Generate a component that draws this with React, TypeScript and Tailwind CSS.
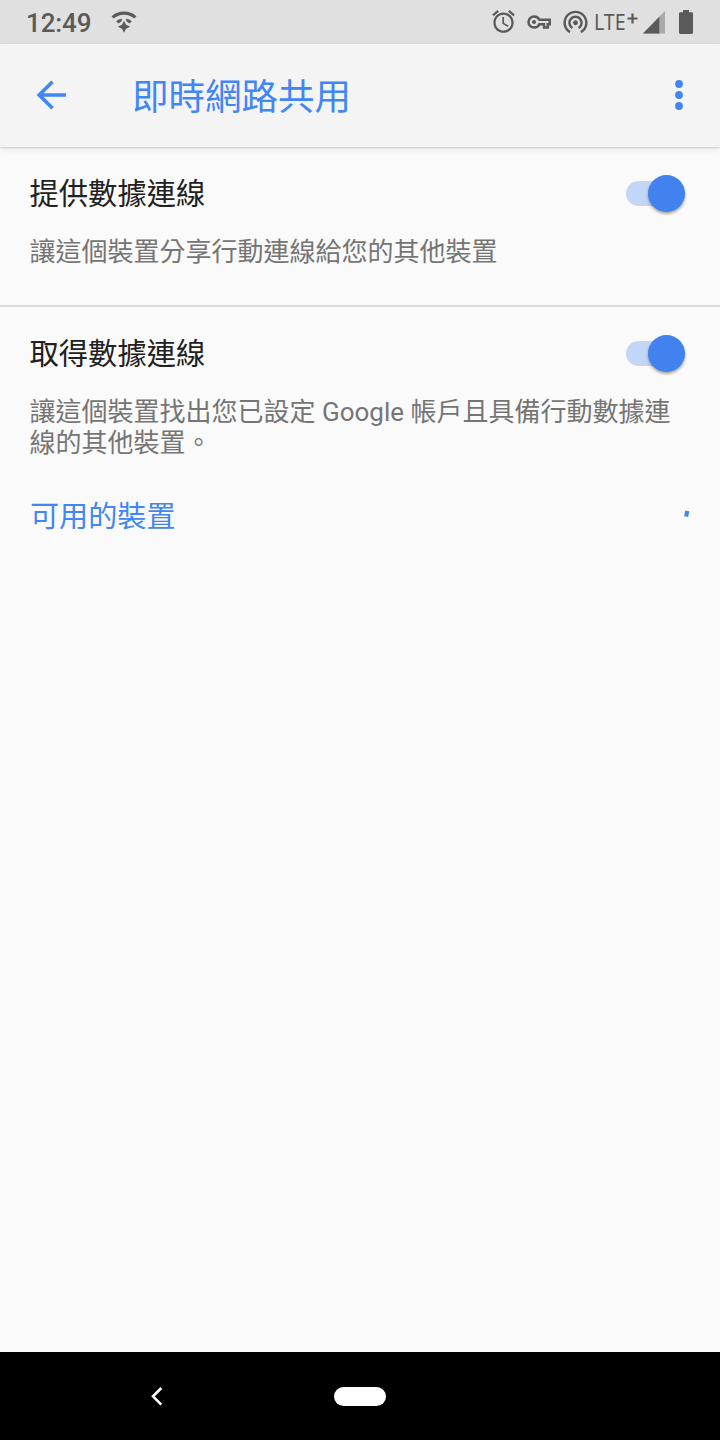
import React from 'react';

const StatusBar = () => {
  return (
    <header className="flex h-11 items-start bg-[#e0e0e0] text-[#5a5a5a]">
      <span className="ml-[26px] mt-[8px] w-[66px] whitespace-nowrap text-[26px] leading-[30px] font-medium tracking-[-0.1px]">12:49</span>
      <svg className="ml-[19px] mt-[10px] shrink-0" width="26" height="24" viewBox="0 0 26 24" fill="none">
        <path d="M1.6 7.4C8 1.8 18 1.8 24.4 7.4" stroke="currentColor" strokeWidth="3.2" />
        <path d="M5.2 11.2Q7.5 9 11 8.8L10.6 11.2L7.4 13.6zM20.8 11.2Q18.5 9 15 8.8L15.4 11.2L18.6 13.6z" fill="currentColor" />
        <path d="M13 10.8l2 4 4.2 2-4.2 2L13 22.8l-2-4L6.8 16.8l4.2-2z" fill="currentColor" />
      </svg>
      <div className="ml-auto flex items-start">
        <svg className="mt-[8px]" width="27" height="27" viewBox="0 0 24 24" fill="currentColor">
          <path d="M22 5.72l-4.6-3.86-1.29 1.53 4.6 3.86L22 5.72zM7.88 3.39L6.6 1.86 2 5.71l1.29 1.53 4.59-3.85zM12.5 8H11v6l4.75 2.85.75-1.23-4-2.37V8zM12 4c-4.97 0-9 4.03-9 9s4.02 9 9 9c4.97 0 9-4.03 9-9s-4.03-9-9-9zm0 16c-3.87 0-7-3.13-7-7s3.13-7 7-7 7 3.13 7 7-3.13 7-7 7z" />
        </svg>
        <svg className="ml-[10px] mt-[10px]" width="24" height="24" viewBox="0 0 24 24" fill="none" stroke="currentColor" strokeWidth="2.5">
          <path d="M22.7 9.7H12.4C11.5 7.7 9.6 6.4 7 6.4C4 6.4 1.5 8.9 1.5 12S4 17.6 7 17.6C9.6 17.6 11.5 16.3 12.4 14.3H17V17.6H20.8V14.3H22.7z" />
          <circle cx="7" cy="12" r="2.1" fill="currentColor" stroke="none" />
        </svg>
        <svg className="ml-[10px] mt-[7px]" width="29" height="29" viewBox="0 0 24 24" fill="currentColor">
          <path d="M12 11c-1.1 0-2 .9-2 2s.9 2 2 2 2-.9 2-2-.9-2-2-2zm6 2c0-3.31-2.69-6-6-6s-6 2.69-6 6c0 2.22 1.21 4.15 3 5.19l1-1.74c-1.19-.7-2-1.97-2-3.45 0-2.21 1.79-4 4-4s4 1.79 4 4c0 1.48-.81 2.75-2 3.45l1 1.74c1.79-1.04 3-2.97 3-5.19zM12 3C6.48 3 2 7.48 2 13c0 3.7 2.01 6.92 4.99 8.65l1-1.73C5.61 18.53 4 15.96 4 13c0-4.42 3.58-8 8-8s8 3.58 8 8c0 2.96-1.61 5.53-4 6.92l1 1.73c2.99-1.73 5-4.95 5-8.65 0-5.52-4.48-10-10-10z" />
        </svg>
        <div className="ml-[4px] mt-[8px] flex w-[45px] items-start">
          <span className="w-[33px] origin-left scale-x-[0.87] font-['Noto_Sans'] text-[22.5px] leading-[28px]">LTE</span>
          <svg className="mt-[5px] shrink-0" width="11" height="11" viewBox="0 0 11 11">
            <path d="M5.5 0.5v10M0.5 5.5h10" stroke="currentColor" strokeWidth="2.2" />
          </svg>
        </div>
        <svg className="ml-[4px] mt-[11px]" width="23" height="23" viewBox="0 0 23 23" fill="currentColor">
          <path d="M0 22.5L22 0v22.5z" opacity="0.4" />
          <path d="M0 22.5L16.3 5.8v16.7z" />
        </svg>
        <svg className="ml-[13px] mr-[27px] mt-[10px]" width="14" height="24" viewBox="0 0 14 24" fill="currentColor">
          <path d="M4 0h6v2.3h2.7c.7 0 1.3.6 1.3 1.3v19c0 .8-.6 1.4-1.3 1.4H1.3C.6 24 0 23.4 0 22.6v-19c0-.7.6-1.3 1.3-1.3H4z" />
        </svg>
      </div>
    </header>
  );
};

const AppBar = () => {
  return (
    <div className="relative flex h-[103px] items-center bg-[#f4f4f4] pb-[1px] text-[#4285f4] shadow-[0_1px_2px_rgba(0,0,0,0.16),0_3px_8px_rgba(0,0,0,0.06)]">
      <svg className="ml-[36px]" width="31" height="30" viewBox="0 0 31 30" fill="none" stroke="currentColor" strokeWidth="3.6">
        <path d="M30 15H4M16.5 1.7L3.2 15l13.3 13.3" />
      </svg>
      <h1 className="ml-[65px] pt-[6px] text-[36.5px] leading-[48px]">即時網路共用</h1>
      <svg className="ml-auto mr-[36px]" width="10" height="32" viewBox="0 0 10 32" fill="currentColor">
        <circle cx="5" cy="5" r="3.9" />
        <circle cx="5" cy="16" r="3.9" />
        <circle cx="5" cy="27" r="3.9" />
      </svg>
    </div>
  );
};

const Switch = () => {
  return (
    <button role="switch" aria-checked="true" className="flex h-[37px] w-[59px] items-center justify-end rounded-full">
      <span className="h-[25px] w-[36px] rounded-l-full bg-[#c2d7f8]" />
      <span className="-ml-[14px] h-[37px] w-[37px] shrink-0 rounded-full bg-[#4282ee] shadow-[0_2px_3px_rgba(0,0,0,0.35)]" />
    </button>
  );
};

const Setting = ({ title, children }: { title: string; children: React.ReactNode }) => {
  return (
    <section className="pl-[29.5px] pr-[35.5px] pt-[28px]">
      <div className="flex h-[37px] items-center justify-between">
        <h2 className="pt-[2px] text-[29.3px] leading-[37px] text-[#212121]">{title}</h2>
        <Switch />
      </div>
      <p className="mt-[25px] whitespace-nowrap text-[26px] leading-[30.5px] text-[#757575]">{children}</p>
    </section>
  );
};

const App = () => {
  return (
    <div className="flex h-[1440px] w-[720px] flex-col overflow-hidden bg-[#fafafa] font-['Roboto','Noto_Sans_CJK_TC',sans-serif]">
      <StatusBar />
      <AppBar />
      <main className="flex-1">
        <div className="h-[160px] border-b-2 border-[#dcdcdc]">
          <Setting title="提供數據連線">讓這個裝置分享行動連線給您的其他裝置</Setting>
        </div>
        <Setting title="取得數據連線">
          讓這個裝置找出您已設定 Google 帳戶且具備行動數據連
          <br />
          線的其他裝置。
        </Setting>
        <div className="mt-[36px] flex items-center justify-between pl-[30px] pr-[30px] text-[#4285f4]">
          <h3 className="pt-[5px] text-[29.1px] leading-[37px]">可用的裝置</h3>
          <svg className="-mt-[3px]" width="6" height="14" viewBox="0 0 6 14" fill="currentColor">
            <path d="M1.2 3.5L5.3 4.3L4.2 10L0.2 9.2z" />
          </svg>
        </div>
      </main>
      <nav className="flex h-[88px] items-center bg-black">
        <svg className="ml-[150px]" width="13" height="20" viewBox="0 0 13 20" fill="none" stroke="white" strokeWidth="2.6">
          <path d="M11.3 2L3 10.3l8.3 8.3" />
        </svg>
        <div className="ml-[171px] h-[19px] w-[52px] rounded-full bg-white" />
      </nav>
    </div>
  );
};

export default App;
